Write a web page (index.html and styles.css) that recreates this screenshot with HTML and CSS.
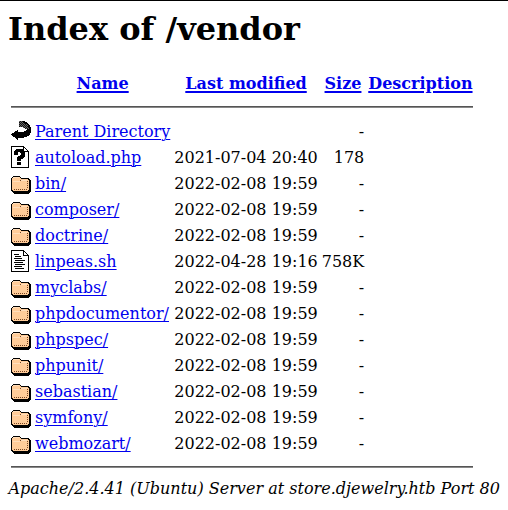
FILE: index.html
```html
<!DOCTYPE html>
<html lang="en"><head><meta charset="utf-8"><title>Index of /vendor</title><link rel="stylesheet" href="styles.css"></head>
<body>
<svg class="defs"><defs>
<pattern id="dither" width="2" height="2" patternUnits="userSpaceOnUse"><path fill="#666" d="M0 0h2v2H0z"/><path fill="#111" d="M0 0h1v1H0zM1 1h1v1H1z"/></pattern>
<symbol id="folder" viewBox="0 0 20 22"><path fill="#000" d="M2 4h7v1h1v1h8v1h1v1h1v12h-1v1h-1v1H3v-1H2v-1H1v-1H0V6h1V5h1z"/><path fill="#fc9" d="M2 5h7v1h1v1h7v1h1v10h-1v1H2v-1H1V6h1z"/><path fill="#fff" d="M2 5h6v1H2zM2 9h7v1H2zM10 8h6v1h-6z" opacity=".35"/><path fill="#742" d="M9 8h1v1H9zM16 9h1v1h-1zM16 11h1v1h-1zM16 13h1v1h-1zM16 15h1v1h-1zM15 17h1v1h-1zM13 17h1v1h-1zM11 17h1v1h-1zM9 17h1v1H9zM7 17h1v1H7zM5 17h1v1H5zM3 17h1v1H3z"/></symbol>
<symbol id="back" viewBox="0 0 20 22"><path fill="url(#dither)" d="M8 1h4v1h3v1h2v1h1v2h1v4h-3V9h-2V8h-2V7H8z"/><path d="M12 1h2v1h2v1h1v1h1v1h1v2h1v6h-1v2h-1v1h-2v1h-3v1H7v2H6v-1H5v-1H4v-1H2v-1H1v-1H0v-1h1v-1h2v-1h1v-1h2v-1h1v2h6v-1h2v-1h1v-1h1V9h1V7h-1V5h-1V4h-2V3h-2V2h-1z"/></symbol>
<symbol id="page" viewBox="0 0 20 22"><path d="M0 0h13v1h1v1h1v1h1v1h1v1h1v17H0z"/><path fill="#fff" d="M1 1h11v5h5v15H1zM13 2h1v1h1v1h1v1h-3z"/></symbol>
<symbol id="unknown" viewBox="0 0 20 22"><use href="#page" width="20" height="22"/><path d="M5 3h7v1h1v1h1v6h-1v1h-1v1h-2v2H6v-4h1v-1h2V9h1V7H9V6H7v3H3V5h1V4h1zM6 16h4v3H6z"/></symbol>
<symbol id="text" viewBox="0 0 20 22"><use href="#page" width="20" height="22"/><path d="M3 4h5v1H3zM4 6h6v1H4zM3 8h8v1H3zM4 10h10v1H4zM3 12h9v1H3zM4 14h10v1H4zM3 16h8v1H3zM4 18h9v1H4z"/></symbol>
</defs></svg>
<h1>Index of /vendor</h1>
<table>
<thead><tr><th></th><th><a href="#">Name</a></th><th><a href="#">Last modified</a></th><th><a href="#">Size</a></th><th><a href="#">Description</a></th></tr>
<tr><th colspan="5"><hr></th></tr></thead>
<tbody>
<tr><td class="icon"><svg><use href="#back"/></svg></td><td><a href="#">Parent Directory</a></td><td></td><td class="num">-</td><td></td></tr>
<tr><td class="icon"><svg><use href="#unknown"/></svg></td><td><a href="#">autoload.php</a></td><td class="num">2021-07-04 20:40</td><td class="num">178</td><td></td></tr>
<tr><td class="icon"><svg><use href="#folder"/></svg></td><td><a href="#">bin/</a></td><td class="num">2022-02-08 19:59</td><td class="num">-</td><td></td></tr>
<tr><td class="icon"><svg><use href="#folder"/></svg></td><td><a href="#">composer/</a></td><td class="num">2022-02-08 19:59</td><td class="num">-</td><td></td></tr>
<tr><td class="icon"><svg><use href="#folder"/></svg></td><td><a href="#">doctrine/</a></td><td class="num">2022-02-08 19:59</td><td class="num">-</td><td></td></tr>
<tr><td class="icon"><svg><use href="#text"/></svg></td><td><a href="#">linpeas.sh</a></td><td class="num">2022-04-28 19:16</td><td class="num">758K</td><td></td></tr>
<tr><td class="icon"><svg><use href="#folder"/></svg></td><td><a href="#">myclabs/</a></td><td class="num">2022-02-08 19:59</td><td class="num">-</td><td></td></tr>
<tr><td class="icon"><svg><use href="#folder"/></svg></td><td><a href="#">phpdocumentor/</a></td><td class="num">2022-02-08 19:59</td><td class="num">-</td><td></td></tr>
<tr><td class="icon"><svg><use href="#folder"/></svg></td><td><a href="#">phpspec/</a></td><td class="num">2022-02-08 19:59</td><td class="num">-</td><td></td></tr>
<tr><td class="icon"><svg><use href="#folder"/></svg></td><td><a href="#">phpunit/</a></td><td class="num">2022-02-08 19:59</td><td class="num">-</td><td></td></tr>
<tr><td class="icon"><svg><use href="#folder"/></svg></td><td><a href="#">sebastian/</a></td><td class="num">2022-02-08 19:59</td><td class="num">-</td><td></td></tr>
<tr><td class="icon"><svg><use href="#folder"/></svg></td><td><a href="#">symfony/</a></td><td class="num">2022-02-08 19:59</td><td class="num">-</td><td></td></tr>
<tr><td class="icon"><svg><use href="#folder"/></svg></td><td><a href="#">webmozart/</a></td><td class="num">2022-02-08 19:59</td><td class="num">-</td><td></td></tr>
<tr><th colspan="5"><hr></th></tr>
</tbody></table>
<address>Apache/2.4.41 (Ubuntu) Server at store.djewelry.htb Port 80</address>
</body></html>
```
FILE: styles.css
```css
body{margin:0;padding:9px 8px 0;border-top:1px solid #000;background:#fff;color:#000;font:16px/19px "DejaVu Serif",serif}
.defs{position:absolute;width:0;height:0}
h1{font-size:32px;line-height:38px;margin:0 0 23px}
table{border-spacing:2px}
td,th{padding:1px}
.icon svg{display:block;width:20px;height:22px;shape-rendering:crispEdges}
a{color:#00e;text-underline-offset:2px}
td a{text-decoration-thickness:1px}
th a{text-decoration-thickness:2px}
hr{height:2px;margin:8px 0;border:0;background:linear-gradient(#555 50%,#888 50%)}
thead hr{margin-top:9px}
.num{text-align:right}
address{padding-left:.4px;letter-spacing:.012px;white-space:nowrap}
```
